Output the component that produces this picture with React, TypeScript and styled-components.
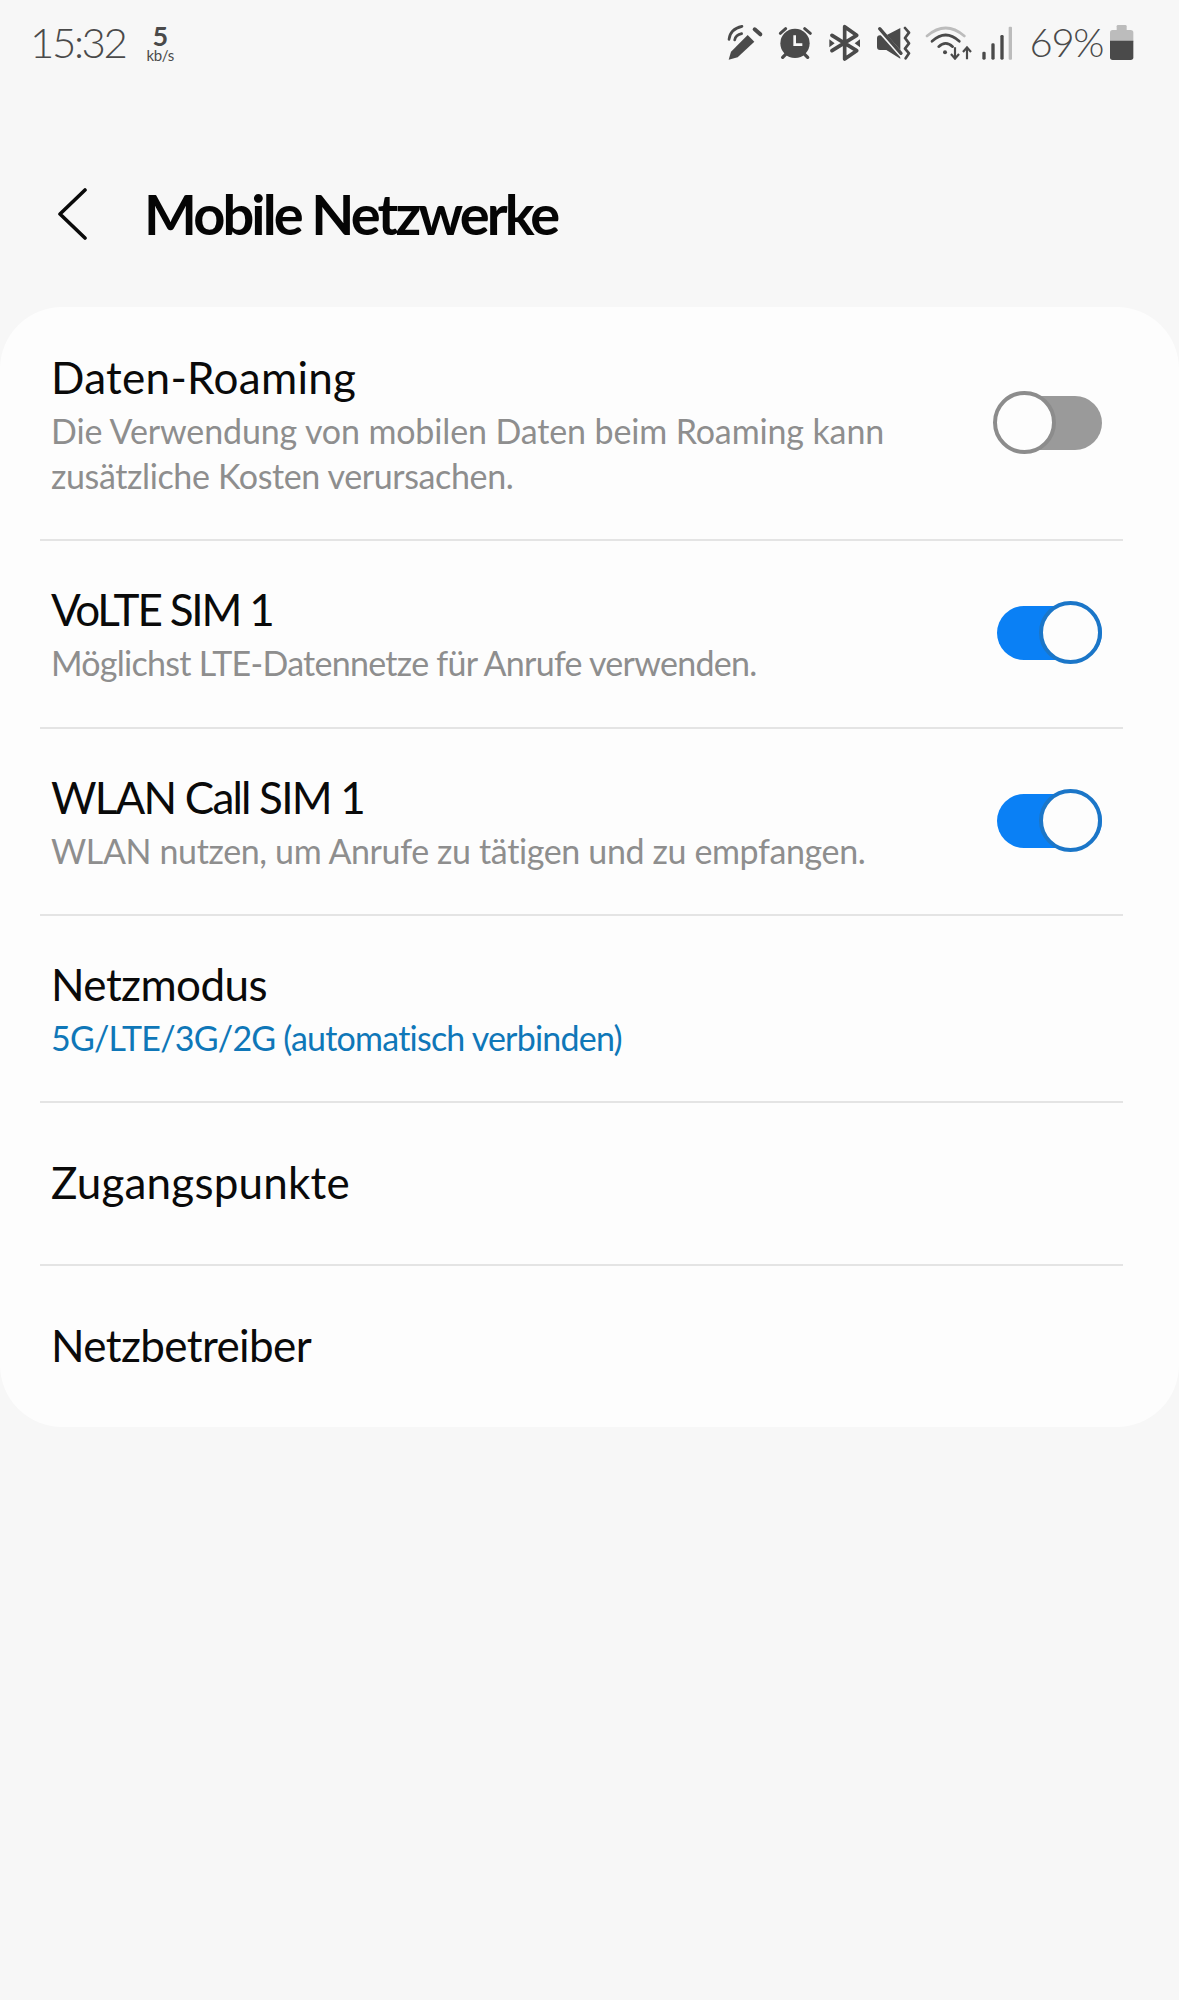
import React from "react";
import styled, { createGlobalStyle } from "styled-components";

const Global = createGlobalStyle`
  html, body { margin: 0; padding: 0; background: #f7f7f7; }
  body { font-family: "Lato", "Noto Sans", sans-serif; }
`;

const Page = styled.div`
  width: 1179px;
  height: 2000px;
  background: #f7f7f7;
  overflow: hidden;
`;

const StatusBar = styled.div`
  height: 84px;
  display: flex;
  align-items: center;
  justify-content: space-between;
  padding: 0 45px 0 30px;
  color: #4a4a4a;
`;

const StatusGroup = styled.div`
  display: flex;
  align-items: center;
`;

const Clock = styled.span`
  font-size: 42px;
  font-weight: 300;
  letter-spacing: -2.4px;
  line-height: 50px;
`;

const Speed = styled.div`
  display: flex;
  flex-direction: column;
  align-items: center;
  margin-left: 21px;
  margin-top: 2px;
`;

const SpeedValue = styled.span`
  font-size: 27px;
  font-weight: 700;
  line-height: 23px;
`;

const SpeedUnit = styled.span`
  font-size: 15px;
  line-height: 16px;
  letter-spacing: -0.3px;
`;

const StatusIcon = styled.svg<{ $gap?: number }>`
  display: block;
  margin-left: ${(p) => p.$gap ?? 0}px;
  flex: none;
`;

const Battery = styled.span`
  font-size: 40px;
  font-weight: 300;
  letter-spacing: -1.4px;
  line-height: 50px;
  margin-left: 16px;
`;

const Header = styled.header`
  height: 223px;
  display: flex;
  align-items: center;
  padding: 36px 0 0 57px;
  box-sizing: border-box;
`;

const BackIcon = styled.svg`
  display: block;
  flex: none;
`;

const Title = styled.h1`
  margin: 0 0 0 55px;
  font-size: 56px;
  font-weight: 700;
  line-height: 64px;
  letter-spacing: -2.9px;
  color: #050505;
  white-space: nowrap;
`;

const Card = styled.section`
  background: #fdfdfd;
  border-radius: 62px;
  height: 1120px;
  box-sizing: border-box;
`;

const Row = styled.div<{ $h: number; $last?: boolean; $pb?: number }>`
  height: ${(p) => p.$h}px;
  margin: 0 56px 0 40px;
  padding: 0 21px ${(p) => p.$pb ?? 0}px 11px;
  box-sizing: border-box;
  display: flex;
  align-items: center;
  justify-content: space-between;
  border-bottom: ${(p) => (p.$last ? "none" : "2px solid #e4e4e4")};
`;

const RowText = styled.div`
  display: flex;
  flex-direction: column;
`;

const RowTitle = styled.div<{ $track?: number }>`
  font-size: 44px;
  line-height: 56px;
  color: #0a0a0a;
  letter-spacing: ${(p) => p.$track ?? 0}px;
  white-space: nowrap;
  & + div {
    margin-top: 3px;
  }
`;

const RowSub = styled.div<{ $accent?: boolean; $track?: number }>`
  font-size: 34px;
  line-height: 45px;
  white-space: nowrap;
  letter-spacing: ${(p) => p.$track ?? 0}px;
  color: ${(p) => (p.$accent ? "#0f77b8" : "#8e8e8e")};
`;

const Track = styled.div<{ $on?: boolean }>`
  position: relative;
  width: 105px;
  height: 54px;
  flex: none;
  border-radius: 27px;
  background: ${(p) => (p.$on ? "#0a80f5" : "#9a9a9a")};
`;

const Knob = styled.div<{ $on?: boolean }>`
  position: absolute;
  top: -5px;
  ${(p) => (p.$on ? "right: 0;" : "left: -4px;")}
  width: 63px;
  height: 63px;
  box-sizing: border-box;
  border-radius: 50%;
  background: #fdfdfd;
  border: 4px solid ${(p) => (p.$on ? "#1b76c8" : "#8c8c8c")};
`;

const Toggle = ({ on }: { on?: boolean }) => (
  <Track $on={on}>
    <Knob $on={on} />
  </Track>
);

const DARK = "#4a4a4a";
const LIGHT = "#bcbcbc";

const PenIcon = () => (
  <StatusIcon width={37} height={37} viewBox="88 72 111 111" fill="none">
    <path d="M93 179 L100 155 L150 105 L170 125 L120 172 Z" fill={DARK} />
    <path d="M171 88 L188 103" stroke={DARK} strokeWidth={12} strokeLinecap="round" />
    <path d="M94 118 C96 98 111 84 133 79" stroke={DARK} strokeWidth={8} strokeLinecap="round" />
    <path d="M111 120 C113 110 121 103 132 101" stroke={DARK} strokeWidth={8} strokeLinecap="round" />
  </StatusIcon>
);

const AlarmIcon = () => (
  <StatusIcon $gap={14} width={35} height={36} viewBox="240 72 105 108" fill="none">
    <circle cx={291} cy={130} r={44} fill={DARK} />
    <path d="M290 106 V134 H313" stroke="#f7f7f7" strokeWidth={8} />
    <path d="M247 100 L263 86 M320 86 L337 100" stroke={DARK} strokeWidth={9} strokeLinecap="round" />
    <path d="M254 172 L263 163 M329 172 L320 163" stroke={DARK} strokeWidth={10} strokeLinecap="round" />
  </StatusIcon>
);

const BluetoothIcon = () => (
  <StatusIcon $gap={16} width={31} height={37} viewBox="393 72 93 111" fill="none">
    <path d="M402 106 L476 152 L440 177 V80 L476 106 L402 152" stroke={DARK} strokeWidth={11} strokeLinejoin="round" strokeLinecap="round" />
    <path d="M394 118 L410 130 L394 142 Z M486 118 L470 130 L486 142 Z" fill={DARK} />
  </StatusIcon>
);

const MuteIcon = () => (
  <StatusIcon $gap={15} width={36} height={36} viewBox="532 72 108 108" fill="none">
    <path d="M538 115 Q538 106 547 106 H566 L608 84 V176 L566 150 H547 Q538 150 538 141 Z" fill={DARK} />
    <path d="M536 80 L616 170" stroke="#f7f7f7" strokeWidth={14} />
    <path d="M546 86 L610 160" stroke={DARK} strokeWidth={10} strokeLinecap="round" />
    <path d="M622 84 L634 98 L622 114 L634 130 L622 146 L634 160 L624 175" stroke={DARK} strokeWidth={8} strokeLinecap="round" strokeLinejoin="round" />
  </StatusIcon>
);

const WifiIcon = () => (
  <StatusIcon $gap={10} width={52} height={36} viewBox="670 72 156 108" fill="none">
    <path d="M688 108 Q744 60 800 108" stroke={LIGHT} strokeWidth={8} strokeLinecap="round" />
    <path d="M703 124 Q744 86 785 124" stroke={DARK} strokeWidth={8} strokeLinecap="round" />
    <path d="M723 140 Q744 120 765 140" stroke={DARK} strokeWidth={8} strokeLinecap="round" />
    <circle cx={742} cy={157} r={6} fill={DARK} />
    <path d="M772 142 V174 M760 162 L772 176 L784 162" stroke={DARK} strokeWidth={6.5} />
    <path d="M808 178 V144 M796 156 L808 142 L820 156" stroke={DARK} strokeWidth={6.5} />
  </StatusIcon>
);

const SignalIcon = () => (
  <StatusIcon $gap={7} width={34} height={36} viewBox="848 72 102 108">
    <rect x={855} y={155} width={10} height={24} rx={4} fill={DARK} />
    <rect x={882} y={130} width={10} height={49} rx={4} fill={DARK} />
    <rect x={909} y={105} width={10} height={74} rx={4} fill={DARK} />
    <rect x={934} y={80} width={10} height={99} rx={3} fill={LIGHT} />
  </StatusIcon>
);

const BatteryIcon = () => (
  <StatusIcon $gap={6} width={25} height={37} viewBox="1227 72 75 111">
    <rect x={1250} y={75} width={30} height={20} rx={4} fill={LIGHT} />
    <rect x={1230} y={90} width={70} height={40} rx={8} fill={LIGHT} />
    <path d="M1230 122 H1300 V172 Q1300 180 1292 180 H1238 Q1230 180 1230 172 Z" fill={DARK} />
  </StatusIcon>
);

export default function App() {
  return (
    <Page>
      <Global />
      <StatusBar>
        <StatusGroup>
          <Clock>15:32</Clock>
          <Speed>
            <SpeedValue>5</SpeedValue>
            <SpeedUnit>kb/s</SpeedUnit>
          </Speed>
        </StatusGroup>
        <StatusGroup>
          <PenIcon />
          <AlarmIcon />
          <BluetoothIcon />
          <MuteIcon />
          <WifiIcon />
          <SignalIcon />
          <Battery>69%</Battery>
          <BatteryIcon />
        </StatusGroup>
      </StatusBar>
      <Header>
        <BackIcon width={32} height={52} viewBox="0 0 32 52" fill="none">
          <path d="M28 2 L3 26 L28 50" stroke="#0a0a0a" strokeWidth={3.6} strokeLinecap="round" strokeLinejoin="round" />
        </BackIcon>
        <Title>Mobile Netzwerke</Title>
      </Header>
      <Card>
        <Row $h={234}>
          <RowText>
            <RowTitle $track={0.3}>Daten-Roaming</RowTitle>
            <RowSub $track={-0.13}>Die Verwendung von mobilen Daten beim Roaming kann</RowSub>
            <RowSub $track={-0.37}>zusätzliche Kosten verursachen.</RowSub>
          </RowText>
          <Toggle />
        </Row>
        <Row $h={188} $pb={2}>
          <RowText>
            <RowTitle $track={-2.2}>VoLTE SIM 1</RowTitle>
            <RowSub $track={-0.72}>Möglichst LTE-Datennetze für Anrufe verwenden.</RowSub>
          </RowText>
          <Toggle on />
        </Row>
        <Row $h={187} $pb={2}>
          <RowText>
            <RowTitle $track={-1.8}>WLAN Call SIM 1</RowTitle>
            <RowSub $track={-0.37}>WLAN nutzen, um Anrufe zu tätigen und zu empfangen.</RowSub>
          </RowText>
          <Toggle on />
        </Row>
        <Row $h={187} $pb={2}>
          <RowText>
            <RowTitle $track={-0.55}>Netzmodus</RowTitle>
            <RowSub $accent $track={-0.78}>5G/LTE/3G/2G (automatisch verbinden)</RowSub>
          </RowText>
        </Row>
        <Row $h={163} $pb={4}>
          <RowTitle $track={0.2}>Zugangspunkte</RowTitle>
        </Row>
        <Row $h={161} $last $pb={4}>
          <RowTitle $track={-0.6}>Netzbetreiber</RowTitle>
        </Row>
      </Card>
    </Page>
  );
}
